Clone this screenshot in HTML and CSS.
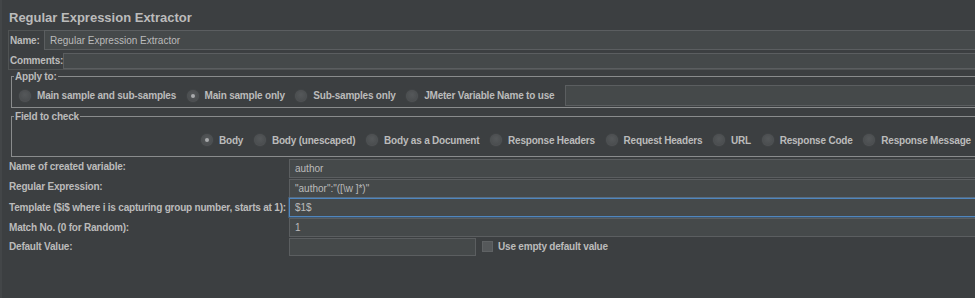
FILE: index.html
```html
<!DOCTYPE html>
<html lang="en">
<head>
  <meta charset="UTF-8">
  <title>Regular Expression Extractor</title>
  <link rel="stylesheet" href="styles.css">
</head>
<body>
  <div class="panel">
    <h1 class="title">Regular Expression Extractor</h1>

    <div class="namebox">
      <div class="name-row">
        <label class="lbl">Name:</label>
        <div class="field">Regular Expression Extractor</div>
      </div>
      <div class="comments-row">
        <label class="lbl">Comments:</label>
        <div class="field"></div>
      </div>
    </div>

    <fieldset class="group apply">
      <legend>Apply to:</legend>
      <div class="radios">
        <span class="radio"><i></i>Main sample and sub-samples</span>
        <span class="radio on"><i></i>Main sample only</span>
        <span class="radio"><i></i>Sub-samples only</span>
        <span class="radio"><i></i>JMeter Variable Name to use</span>
        <div class="field var-field"></div>
      </div>
    </fieldset>

    <fieldset class="group check">
      <legend>Field to check</legend>
      <div class="radios">
        <span class="radio on"><i></i>Body</span>
        <span class="radio"><i></i>Body (unescaped)</span>
        <span class="radio"><i></i>Body as a Document</span>
        <span class="radio"><i></i>Response Headers</span>
        <span class="radio"><i></i>Request Headers</span>
        <span class="radio"><i></i>URL</span>
        <span class="radio"><i></i>Response Code</span>
        <span class="radio"><i></i>Response Message</span>
      </div>
    </fieldset>

    <div class="form">
      <label class="lbl">Name of created variable:</label>
      <div class="field">author</div>
      <label class="lbl">Regular Expression:</label>
      <div class="field">"author":"([\w ]*)"</div>
      <label class="lbl">Template ($i$ where i is capturing group number, starts at 1):</label>
      <div class="field focus">$1$</div>
      <label class="lbl">Match No. (0 for Random):</label>
      <div class="field">1</div>
      <label class="lbl">Default Value:</label>
      <div class="default-row">
        <div class="field short"></div>
        <span class="check-box"></span>
        <span class="lbl">Use empty default value</span>
      </div>
    </div>
  </div>
</body>
</html>
```

FILE: styles.css
```css
* { box-sizing: border-box; }
html, body { overflow: hidden; }
body {
  margin: 0;
  background: #3c3f41;
  color: #bbbbbb;
  font-family: "Liberation Sans", Arial, sans-serif;
  font-size: 10px;
  height: 298px;
  border-left: 2px solid #434648;
}
.panel { width: 1000px; padding-left: 6px; }
.title {
  margin: 0;
  padding: 8px 0 0 1px;
  height: 27px;
  line-height: 19px;
  font-size: 13px;
  font-weight: bold;
  color: #bbbbbb;
}
.lbl { font-weight: bold; white-space: nowrap; letter-spacing: -0.2px; }
.field {
  background: #45494a;
  border: 1px solid #5b5e60;
  color: #bbbbbb;
  padding-left: 5px;
  white-space: nowrap;
  display: flex;
  align-items: center;
}

.namebox {
  margin-top: 3px;
  border: 1px solid #505354;
  border-right: none;
  border-top: none;
}
.name-row { display: flex; align-items: center; height: 20px; }
.name-row .lbl { width: 35px; padding-left: 1px; border-top: 1px solid #505354; height: 20px; line-height: 19px; }
.name-row .field { flex: 1; height: 20px; }
.comments-row { display: flex; align-items: center; height: 18px; margin-top: 1px; }
.comments-row .lbl { width: 54px; padding-left: 1px; }
.comments-row .field { flex: 1; height: 16px; margin-top: 1px; }

.group {
  margin: 0 0 0 3px;
  padding: 0;
  border: 1px solid #8a8c8d;
  border-right: none;
  min-width: 0;
}
.group legend {
  padding: 0 1px;
  margin-left: 2px;
  font-weight: bold;
  line-height: 13px;
  letter-spacing: -0.2px;
}
.radios { display: flex; align-items: center; white-space: nowrap; }
.radio {
  display: inline-flex;
  align-items: center;
  font-weight: bold;
  letter-spacing: -0.2px;
}
.radio i {
  width: 12px;
  height: 12px;
  border-radius: 50%;
  margin-right: 6px;
  background: radial-gradient(circle at 50% 40%, #55585a, #45484a);
  box-shadow: 0 0 0 1px #404345, inset 0 0 0 1px #4e5153;
  display: inline-flex;
  align-items: center;
  justify-content: center;
}
.radio.on i::after {
  content: "";
  width: 4px;
  height: 4px;
  border-radius: 50%;
  background: #a9abad;
}

.apply .radios { padding: 2px 0 1px 7px; gap: 10.5px; }
.apply .var-field { flex: 1; height: 21px; }

.check { margin-top: 2px; }
.check .radios { height: 20px; padding-left: 189px; margin: 7px 0 6px; gap: 10.7px; }

.form {
  display: grid;
  grid-template-columns: 281px 1fr;
  grid-auto-rows: 19px;
  row-gap: 0.5px;
  margin-top: 2px;
  align-items: center;
}
.form > .lbl { padding-left: 1px; }
.form > .lbl:nth-of-type(1),
.form > .lbl:nth-of-type(2) { padding-bottom: 4px; }
.form > .field { height: 19px; }
.form .focus {
  border-color: #4f86bf;
  box-shadow: 0 0 0 1px rgba(79, 134, 191, 0.35);
}
.default-row { display: flex; align-items: center; height: 19px; }
.field.short { width: 187px; height: 18px; }
.check-box {
  width: 11px;
  height: 11px;
  margin: 0 5px 0 6px;
  background: #55585a;
  border: 1px solid #5f6264;
}
```
